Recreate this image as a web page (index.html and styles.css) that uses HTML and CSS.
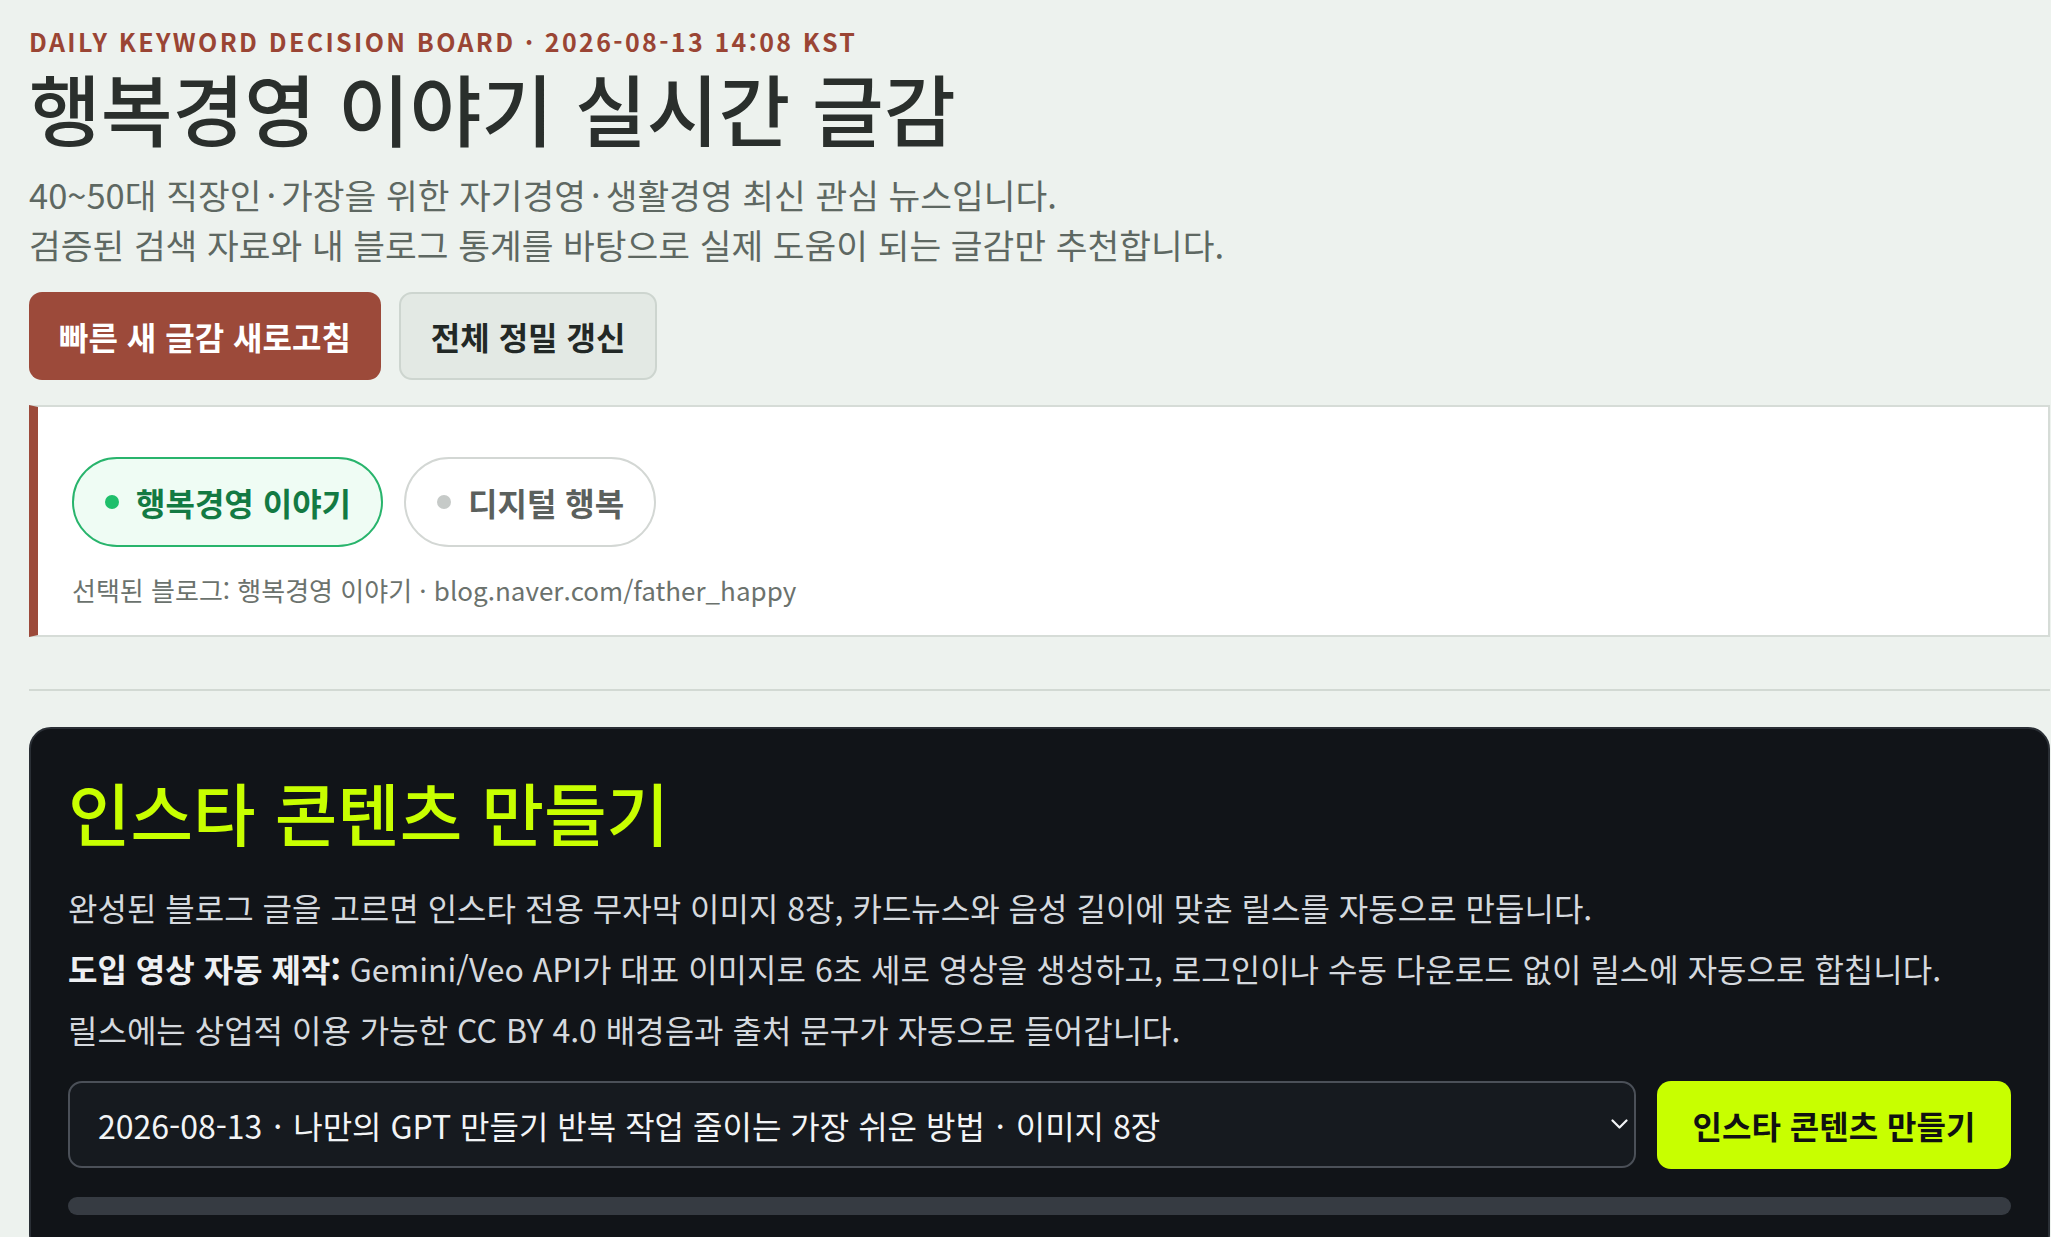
FILE: index.html
```html
<!DOCTYPE html>
<html lang="ko">
<head>
  <meta charset="UTF-8" />
  <meta name="viewport" content="width=device-width, initial-scale=1.0"/>
  <title>행복경영 이야기 실시간 글감</title>
  <link rel="stylesheet" href="styles.css">
</head>
<body>
  <div class="page">
    <header class="hero">
      <p class="eyebrow">DAILY KEYWORD DECISION BOARD · 2026-08-13 14:08 KST</p>
      <h1>행복경영 이야기 실시간 글감</h1>
      <p class="lead">40~50대 직장인<span class="sep">·</span>가장을 위한 자기경영<span class="sep">·</span>생활경영 최신 관심 뉴스입니다.<br>검증된 검색 자료와 내 블로그 통계를 바탕으로 실제 도움이 되는 글감만 추천합니다.</p>
      <div class="actions">
        <button class="btn btn-primary">빠른 새 글감 새로고침</button>
        <button class="btn btn-ghost">전체 정밀 갱신</button>
      </div>
    </header>

    <section class="blog-panel">
      <div class="blog-tabs">
        <button class="chip active"><span class="dot"></span>행복경영 이야기</button>
        <button class="chip"><span class="dot"></span>디지털 행복</button>
      </div>
      <p class="blog-meta">선택된 블로그: 행복경영 이야기 · blog.naver.com/father_happy</p>
    </section>

    <hr class="divider">

    <section class="insta-card">
      <h2>인스타 콘텐츠 만들기</h2>
      <p>완성된 블로그 글을 고르면 인스타 전용 무자막 이미지 8장, 카드뉴스와 음성 길이에 맞춘 릴스를 자동으로 만듭니다.</p>
      <p><strong>도입 영상 자동 제작:</strong> Gemini/Veo API가 대표 이미지로 6초 세로 영상을 생성하고, 로그인이나 수동 다운로드 없이 릴스에 자동으로 합칩니다.</p>
      <p>릴스에는 상업적 이용 가능한 CC BY 4.0 배경음과 출처 문구가 자동으로 들어갑니다.</p>

      <div class="insta-row">
        <div class="select-wrap">
          <select id="postSelect">
            <option>2026-08-13 &#8202;·&#8202; 나만의 GPT 만들기 반복 작업 줄이는 가장 쉬운 방법 &#8202;·&#8202; 이미지 8장</option>
          </select>
          <svg class="chevron" viewBox="0 0 17 11" width="17" height="11">
            <path d="M1.5 1.5l7 7 7-7" fill="none" stroke="#f2f4f6" stroke-width="2.2" stroke-linecap="round" stroke-linejoin="round"/>
          </svg>
        </div>
        <button class="btn btn-lime">인스타 콘텐츠 만들기</button>
      </div>

      <div class="progress"><div class="progress-fill" style="width: 0%"></div></div>
    </section>
  </div>
</body>
</html>
```

FILE: styles.css
```css
* {
  margin: 0;
  padding: 0;
  box-sizing: border-box;
}
body {
  background-color: #edf2ee;
  font-family: "Noto Sans CJK KR", "Noto Sans", sans-serif;
  color: #2a2f2c;
}
.page {
  padding: 26px 1px 60px 29px;
}
.eyebrow {
  font-size: 25px;
  line-height: 30px;
  font-weight: 700;
  letter-spacing: 0.095em;
  color: #9a4534;
}
.hero h1 {
  margin-top: 5px;
  font-size: 78px;
  line-height: 92px;
  font-weight: 500;
  color: #2a2f2c;
}
.lead {
  margin-top: 16px;
  font-size: 34.5px;
  line-height: 50px;
  color: #5e6862;
}
.lead .sep {
  margin: 0 5px;
}
.actions {
  display: flex;
  gap: 18px;
  margin-top: 23px;
}
.btn {
  height: 88px;
  padding: 0 30px;
  border: none;
  border-radius: 13px;
  font-family: inherit;
  font-size: 32px;
  font-weight: 700;
  cursor: pointer;
}
.btn-primary {
  background: #9c4a3a;
  color: #fff;
}
.btn-ghost {
  background: #e3e9e4;
  border: 2px solid #cdd5cf;
  color: #222826;
}

.blog-panel {
  margin-top: 25px;
  background: #fff;
  border: 2px solid #d6dcd7;
  border-left: 9px solid #9c4a3a;
  padding: 50px 34px 26px;
}
.blog-tabs {
  display: flex;
  gap: 21px;
}
.chip {
  display: flex;
  align-items: center;
  gap: 17px;
  height: 90px;
  padding: 0 30px 0 31px;
  border: 2px solid #d3d7d4;
  border-radius: 45px;
  background: #fff;
  font-family: inherit;
  font-size: 32px;
  font-weight: 700;
  color: #5b605d;
}
.chip .dot {
  width: 14px;
  height: 14px;
  border-radius: 50%;
  background: #c6cac8;
}
.chip.active {
  border-color: #28b46c;
  background: #effcf4;
  color: #137a43;
}
.chip.active .dot {
  background: #1fbf6b;
}
.blog-meta {
  margin-top: 23px;
  font-size: 26px;
  line-height: 39px;
  color: #6b726d;
}

.divider {
  margin-top: 52px;
  border: none;
  border-top: 2px solid #d2d9d3;
}

.insta-card {
  margin-top: 36px;
  background: #111418;
  border: 2px solid #2a2f35;
  border-radius: 22px;
  padding: 44px 37px 40px;
  color: #d5d9de;
}
.insta-card h2 {
  font-size: 68px;
  line-height: 77px;
  font-weight: 500;
  color: #c8ff00;
}
.insta-card p {
  font-size: 32px;
  line-height: 45px;
  margin-bottom: 16px;
}
.insta-card h2 + p {
  margin-top: 35px;
}
.insta-card strong {
  font-weight: 700;
  color: #eef0f2;
}
.insta-row {
  display: flex;
  gap: 21px;
  margin-top: 29px;
}
.select-wrap {
  position: relative;
  flex: 1;
}
.select-wrap select {
  width: 100%;
  height: 87px;
  padding: 0 60px 0 28px;
  appearance: none;
  background: #161a1f;
  border: 2px solid #4b5058;
  border-radius: 14px;
  font-family: inherit;
  font-size: 32px;
  color: #f2f4f6;
}
.chevron {
  position: absolute;
  right: 8px;
  top: 38px;
  pointer-events: none;
}
.btn-lime {
  width: 354px;
  padding: 0;
  background: #c8ff00;
  color: #111;
  border-radius: 14px;
}
.progress {
  margin-top: 28px;
  height: 18px;
  border-radius: 9px;
  background: #363b42;
  overflow: hidden;
}
.progress-fill {
  height: 100%;
  background: #c8ff00;
}
```
